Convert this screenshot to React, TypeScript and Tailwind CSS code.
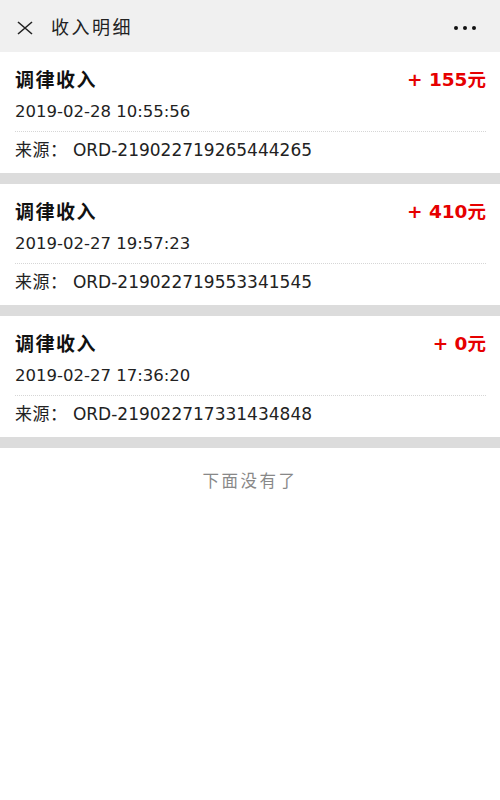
const records = [
  { title: "调律收入", amount: "+ 155元", time: "2019-02-28 10:55:56", source: "ORD-219022719265444265" },
  { title: "调律收入", amount: "+ 410元", time: "2019-02-27 19:57:23", source: "ORD-219022719553341545" },
  { title: "调律收入", amount: "+ 0元", time: "2019-02-27 17:36:20", source: "ORD-219022717331434848" },
];

const font = "font-['DejaVu_Sans','Noto_Sans_CJK_SC',sans-serif]";

export default function App() {
  return (
    <div className={`min-h-[800px] w-[500px] bg-white ${font}`}>
      {/* 顶部导航 */}
      <div className="flex h-[52px] items-center bg-[#f0f0f0] pl-[17px] pr-[24px] pt-[4px]">
        <svg width="16" height="14" viewBox="0 0 16 14" className="text-[#222]">
          <path d="M1 1 L15 13 M15 1 L1 13" stroke="currentColor" strokeWidth="1.6" fill="none" />
        </svg>
        <span className="ml-[18px] text-[18px] leading-none tracking-[2.5px] text-[#222]">收入明细</span>
        <div className="ml-auto flex items-center gap-[5px]">
          <span className="h-[4px] w-[4px] rounded-full bg-[#111]" />
          <span className="h-[4px] w-[4px] rounded-full bg-[#111]" />
          <span className="h-[4px] w-[4px] rounded-full bg-[#111]" />
        </div>
      </div>

      {records.map((r, i) => (
        <div key={i} className="border-b-[11px] border-[#dcdcdc] bg-white pl-[15px] pr-[14px] pt-[16px] pb-[11px]">
          <div className="flex h-[24px] items-center justify-between">
            <span className="text-[19px] font-bold tracking-[1.5px] text-[#111]">{r.title}</span>
            <span className="text-[18.5px] font-bold text-[#e60000]">{r.amount}</span>
          </div>
          <div className="mt-[8px] text-[16.5px] leading-[24px] text-[#222]">{r.time}</div>
          <div className="mt-[7px] border-t border-dotted border-[#d6d6d6] pt-[6px] text-[17px] leading-[24px] text-[#222]">
            <span className="tracking-[0.5px]">来源：</span> {r.source}
          </div>
        </div>
      ))}

      <div className="pt-[24px] text-center text-[16.5px] leading-[20px] tracking-[2.5px] text-[#888]">下面没有了</div>
    </div>
  );
}
